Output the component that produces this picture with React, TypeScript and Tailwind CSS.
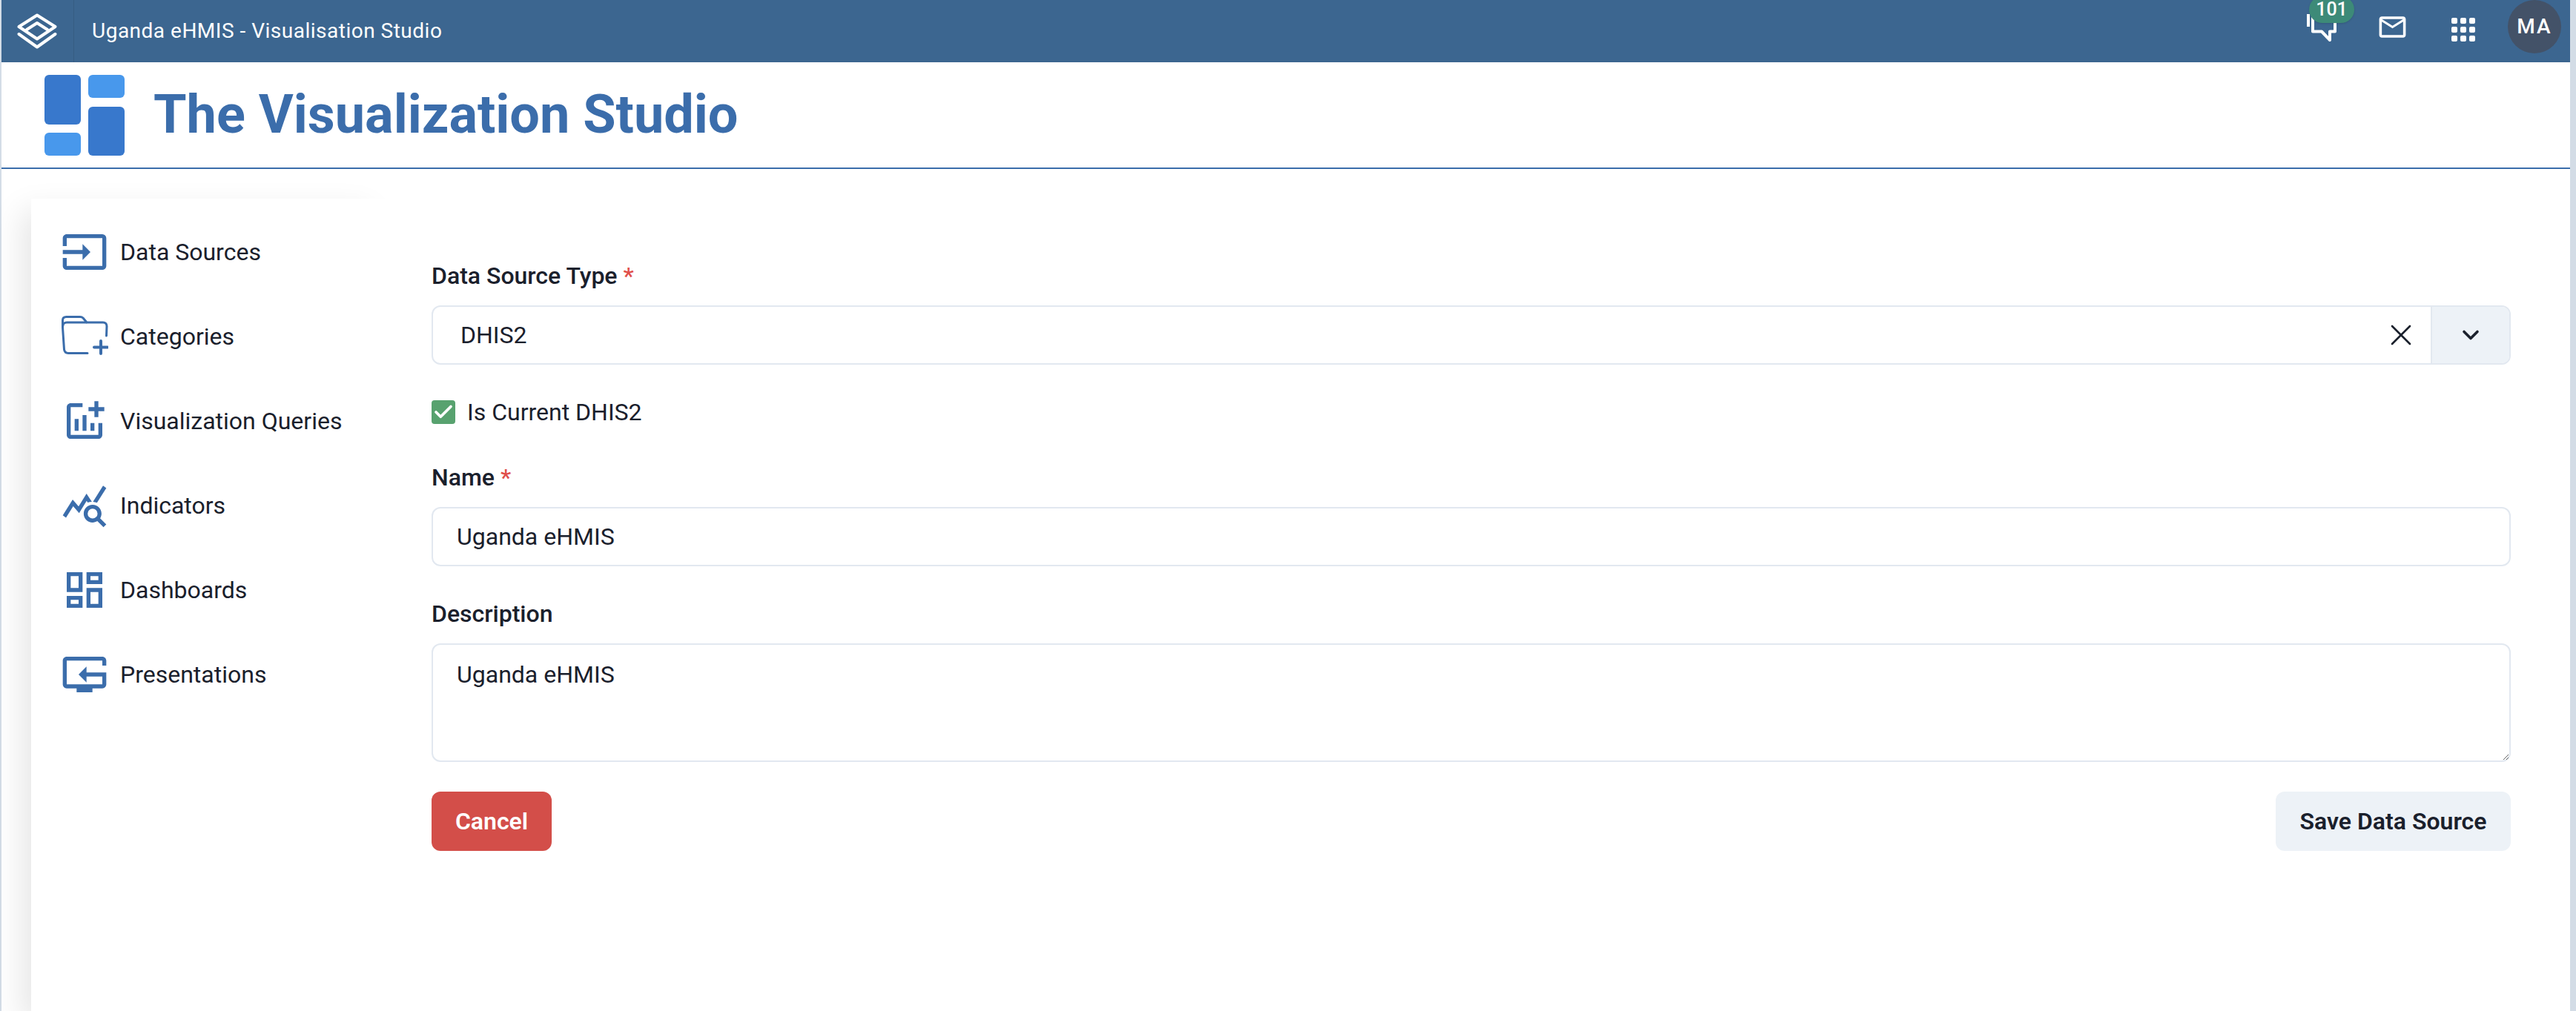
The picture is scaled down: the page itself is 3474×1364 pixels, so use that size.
import React from 'react';
import { MdInput, MdAddchart, MdQueryStats, MdOutlineDashboard, MdMailOutline } from 'react-icons/md';
import { X, ChevronDown, Check } from 'lucide-react';

function FolderPlusIcon() {
  return (
    <svg width="64" height="64" viewBox="0 0 64 64" fill="none" stroke="currentColor" strokeWidth="3" strokeLinecap="round" strokeLinejoin="round">
      <path d="M36 54.500H10c-3 0-5-2-5.500-5L2.500 20V10c0-3 2-4.500 5-4.500H26c2 0 3 .5 4 1.500l5 6h22c3 0 5 2 5 5l-.5 13" />
      <path d="M3 17c0-2 2-4 5-4h26" />
      <path d="M54 38v17M45 46.500h18" strokeWidth="4" />
    </svg>
  );
}

function PresentationIcon() {
  return (
    <svg width="64" height="64" viewBox="0 0 24 24" fill="currentColor">
      <path d="M13 8l-4 4 4 4v-3h8v4H3V5h18v2.500h2V5c0-1.100-.9-2-2-2H3c-1.100 0-2 .9-2 2v12c0 1.100.9 2 2 2h5v2h8v-2h5c1.100 0 2-.9 2-2v-6H13z" />
    </svg>
  );
}

const NAV_ITEMS = [
  { label: 'Data Sources', icon: <MdInput size={64} /> },
  { label: 'Categories', icon: <FolderPlusIcon /> },
  { label: 'Visualization Queries', icon: <MdAddchart size={64} /> },
  { label: 'Indicators', icon: <MdQueryStats size={64} /> },
  { label: 'Dashboards', icon: <MdOutlineDashboard size={64} /> },
  { label: 'Presentations', icon: <PresentationIcon /> },
];

function FieldLabel({ text, required }: { text: string; required?: boolean }) {
  return (
    <label className="block mb-4 text-[32px] leading-[48px] font-medium text-[#1a202c]">
      {text}
      {required && <span className="ml-2 text-[#e04f4a]">*</span>}
    </label>
  );
}

export default function App() {
  return (
    <div className="min-h-screen flex flex-col bg-[#d3dce6] pl-[2px] pr-[8px] font-['Roboto',sans-serif]">
      {/* top bar */}
      <header className="relative z-20 h-[84px] flex items-start bg-[#3c6690] text-white">
        <div className="w-[98px] h-[84px] pr-[2px] flex items-center justify-center border-r border-[#365c82]">
          <svg width="54" height="48" viewBox="0 0 54 48" fill="none" stroke="#ffffff" strokeWidth="4" strokeLinejoin="round" strokeLinecap="round">
            <path d="M27 2.500L51.500 18 27 34.500 2.500 18z" />
            <path d="M13 22l14-9 14 9" />
            <path d="M2.500 28l24.500 17.500L51.500 28" />
          </svg>
        </div>
        <div className="ml-6 h-[84px] flex items-center text-[28px] tracking-[0.5px]">Uganda eHMIS - Visualisation Studio</div>
        <div className="ml-auto mr-3 h-[72px] flex items-center">
          <div className="relative w-10 h-10 mt-[2px]">
            <svg width="40" height="40" viewBox="0 0 40 40" fill="none" stroke="#ffffff" strokeWidth="4" strokeLinejoin="round">
              <path d="M8 6V25.500H20L31 37V25.500H38V6Z" />
              <path d="M2 2V19" />
            </svg>
            <span className="absolute left-[3px] top-[-22px] w-[61px] h-9 rounded-full bg-[#3d8a78] shadow-sm text-[25px] leading-9 font-medium text-center">101</span>
          </div>
          <MdMailOutline size={43} className="ml-[54px]" />
          <svg width="32" height="32" viewBox="0 0 32 32" fill="#ffffff" className="ml-[58px] mt-2">
            <rect x="0" y="0" width="8" height="8" rx="2" />
            <rect x="12" y="0" width="8" height="8" rx="2" />
            <rect x="24" y="0" width="8" height="8" rx="2" />
            <rect x="0" y="12" width="8" height="8" rx="2" />
            <rect x="12" y="12" width="8" height="8" rx="2" />
            <rect x="24" y="12" width="8" height="8" rx="2" />
            <rect x="0" y="24" width="8" height="8" rx="2" />
            <rect x="12" y="24" width="8" height="8" rx="2" />
            <rect x="24" y="24" width="8" height="8" rx="2" />
          </svg>
          <div className="ml-11 w-[72px] h-[72px] rounded-full bg-[#435268] flex items-center justify-center text-[28px] font-medium tracking-[2px]">MA</div>
        </div>
      </header>

      {/* title */}
      <div className="relative z-20 h-[144px] flex items-center bg-white border-b-2 border-[#3b6dab]">
        <svg width="108" height="109" viewBox="0 0 108 109" className="ml-[58px]">
          <rect x="0" y="0" width="49" height="67" rx="6" fill="#3878cc" />
          <rect x="0" y="78" width="49" height="31" rx="6" fill="#4898ec" />
          <rect x="59" y="0" width="49" height="31" rx="6" fill="#4898ec" />
          <rect x="59" y="43" width="49" height="66" rx="6" fill="#3878cc" />
        </svg>
        <h1 className="ml-[39px] text-[72px] leading-none font-bold text-[#3b6dab]">The Visualization Studio</h1>
      </div>

      <div className="flex-1 flex bg-white">
        {/* sidebar */}
        <nav className="ml-10 mt-10 w-[468px] pt-[15px] bg-white shadow-[-12px_16px_40px_rgba(0,0,0,0.1)]">
          {NAV_ITEMS.map((item) => (
            <div key={item.label} className="h-[114px] pl-10 flex items-center">
              <span className="text-[#3b6dab]">{item.icon}</span>
              <span className="ml-4 text-[32px] text-[#1a202c]">{item.label}</span>
            </div>
          ))}
        </nav>

        {/* form */}
        <main className="relative z-10 flex-1 mt-10 pt-20 pl-[72px] pr-20 bg-white text-[#1a202c] flex flex-col gap-10">
          <div>
            <FieldLabel text="Data Source Type" required />
            <div className="h-20 flex rounded-xl border-2 border-[#e2e8f0] overflow-hidden">
              <div className="flex-1 pl-[37px] flex items-center text-[32px]">DHIS2</div>
              <div className="w-[80px] flex items-center justify-center">
                <X size={48} strokeWidth={1.300} color="#1a202c" />
              </div>
              <div className="w-[106px] flex items-center justify-center bg-[#edf2f7] border-l-2 border-[#e2e8f0]">
                <ChevronDown size={36} strokeWidth={2.400} color="#1a202c" />
              </div>
            </div>
          </div>

          <div className="h-12 flex items-center">
            <span className="w-8 h-8 rounded bg-[#58a26f] flex items-center justify-center">
              <Check size={30} strokeWidth={3} color="#ffffff" />
            </span>
            <span className="ml-4 text-[32px]">Is Current DHIS2</span>
          </div>

          <div>
            <FieldLabel text="Name" required />
            <input
              defaultValue="Uganda eHMIS"
              readOnly
              className="block w-full h-20 px-8 rounded-xl border-2 border-[#e2e8f0] text-[32px] outline-none"
            />
          </div>

          <div>
            <FieldLabel text="Description" />
            <textarea
              defaultValue="Uganda eHMIS"
              readOnly
              className="block w-full h-40 px-8 py-4 rounded-xl border-2 border-[#e2e8f0] text-[32px] leading-[48px] outline-none"
            />
          </div>

          <div className="flex justify-between">
            <button className="w-[162px] h-20 rounded-xl bg-[#d34e49] text-white text-[32px] font-semibold">Cancel</button>
            <button className="w-[317px] h-20 rounded-xl bg-[#edf2f7] text-[#1a202c] text-[32px] font-semibold">Save Data Source</button>
          </div>
        </main>
      </div>
    </div>
  );
}
